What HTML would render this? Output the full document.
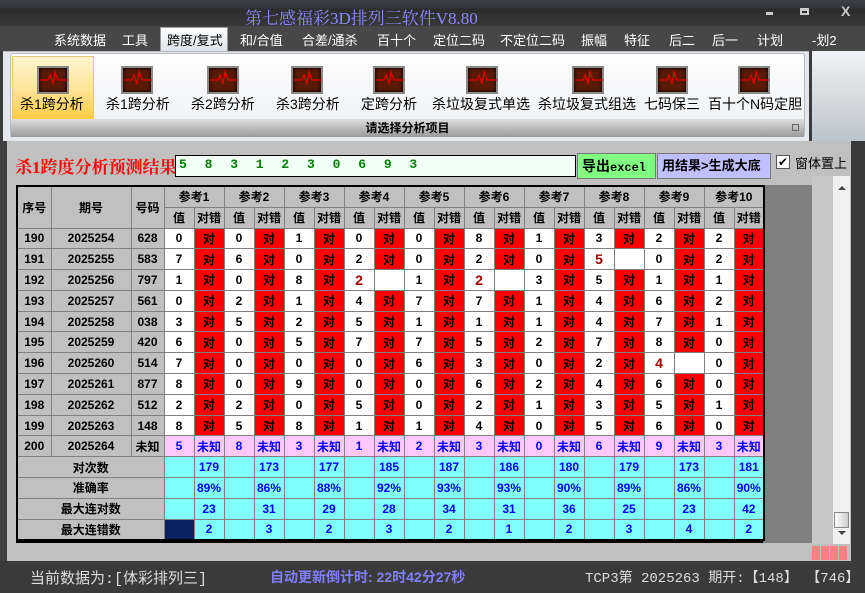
<!DOCTYPE html>
<html><head><meta charset="utf-8">
<style>
*{margin:0;padding:0;box-sizing:border-box}
body{width:865px;height:593px;overflow:hidden;background:#3a3a3a;font-family:"Liberation Sans","Noto Sans CJK SC",sans-serif;position:relative}
.abs{position:absolute}
#title{left:0;top:0;width:865px;height:26px;background:linear-gradient(#3c404a 0,#30333a 8px,#2c2c2c 9px,#383838 26px)}
#title .t{left:245px;top:4px;color:#8a8aff;font-size:17px;font-family:"Liberation Serif","Noto Serif CJK SC",serif}
#menu{left:0;top:26px;width:865px;height:25px;background:#474747}
#menu span{position:absolute;top:4px;color:#fff;font-size:13px}
#tab{left:160px;top:27px;width:68px;height:24px;background:linear-gradient(#fff,#dde3ea);border:1px solid #999;border-bottom:none}
#ribbon{left:3px;top:51px;width:806px;height:90px;background:#e4e7eb;border-top:1px solid #bbb}
#rb{left:10px;top:53px;width:795px;height:84px;background:linear-gradient(#fdfdfd,#eef0f3);border:1px solid #b8bcc4;border-radius:3px}
.ic{position:absolute;top:13px;width:32px;height:28px;background:#5a1a08;border:2px solid #8a8a8a;box-shadow:inset 0 0 4px #000}
.lbl{position:absolute;top:41px;font-size:14px;white-space:nowrap}
#strip{left:11px;top:119px;width:793px;height:18px;background:linear-gradient(#ddd,#9a9a9a);text-align:center;font-size:12px;font-weight:bold;line-height:18px}
#right1{left:812px;top:51px;width:53px;height:90px;background:linear-gradient(#f0f3f6,#bcc4cc)}
#content{left:0;top:141px;width:851px;height:420px;background:#c0c0c0;border-left:7px solid #404040}
#res{left:15px;top:153px;color:#f00;font-size:17px;font-weight:bold;font-family:"Liberation Serif","Noto Serif CJK SC",serif}
#inp{left:175px;top:155px;width:401px;height:22px;background:#f2fff8;border:1px solid #000;color:#008000;font-family:"Liberation Mono",monospace;font-weight:bold;font-size:13px;padding:1px 3px;letter-spacing:5px}
#b1{left:577px;top:153px;width:79px;height:26px;background:#80ff80;border:1px solid #777;font-size:14px;font-weight:bold;line-height:24px;padding-left:4px}
#b2{left:657px;top:153px;width:114px;height:26px;background:#c0c0ff;border:1px solid #777;font-size:13px;font-weight:bold;line-height:24px;padding-left:4px}
#cb{left:776px;top:155px;width:14px;height:14px;background:#fff;border:1px solid #555;font-size:12px;line-height:12px;text-align:center}
#cbt{left:795px;top:153px;font-size:13px}
#dark{left:763px;top:185px;width:49px;height:358px;background:#808080}
#sbp{left:812px;top:176px;width:38px;height:368px;background:#c8c8c8}
#sb{left:833px;top:176px;width:17px;height:368px;background:#f0f0f0}
#thumb{left:834px;top:512px;width:15px;height:16px;background:linear-gradient(90deg,#fff,#ccc);border:1px solid #888}
#pk{left:812px;top:546px;width:36px;height:14px;background:repeating-linear-gradient(90deg,#ff8080 0 8px,#c0c0c0 8px 9px)}
table{position:absolute;left:16px;top:185px;border-collapse:collapse;table-layout:fixed;border:2px solid #000;font-size:12px;font-weight:bold;text-align:center}
td{border:1px solid #808080;height:20.8px;padding:0;overflow:hidden;white-space:nowrap}
.h td{background:#c0c0c0;height:21px}
.g{background:#c0c0c0}
.w{background:#fff}
.r{background:#f00}
.p{background:#ffc8ff;color:#00f}
.c{background:#80ffff;color:#00f}
.d{color:#a00000;font-size:14px}
.n{background:#0a2060}
#status{left:0;top:561px;width:865px;height:32px;background:#3a3a3a;font-size:14px}
#status span{position:absolute;top:6px;white-space:pre}
</style></head><body>
<div id="title" class="abs"><div class="t abs">第七感福彩3D排列三软件V8.80</div>
<div class="abs" style="left:766px;top:12px;width:7px;height:3px;background:#ccc"></div>
<div class="abs" style="left:800px;top:8px;width:9px;height:7px;border:2px solid #ccc;border-top-width:3px"></div>
<div class="abs" style="left:841px;top:3px;color:#ccc;font-size:14px;font-weight:bold">X</div></div>
<div id="menu" class="abs">
<div id="tab" class="abs" style="top:1px"></div>
<span style="left:54px">系统数据</span><span style="left:122px">工具</span><span style="left:167px;color:#000">跨度/复式</span><span style="left:240px">和/合值</span><span style="left:302px">合差/通杀</span><span style="left:377px">百十个</span><span style="left:433px">定位二码</span><span style="left:500px">不定位二码</span><span style="left:581px">振幅</span><span style="left:624px">特征</span><span style="left:669px">后二</span><span style="left:712px">后一</span><span style="left:757px">计划</span><span style="left:812px">-划2</span>
</div>
<div id="ribbon" class="abs"></div>
<div id="right1" class="abs"></div>
<div id="rb" class="abs">
<div class="abs" style="left:1px;top:2px;width:82px;height:65px;background:linear-gradient(#fff6d0,#ffe49a 50%,#ffcc40);border:1px solid #e8c870"></div>
</div>
<div id="strip" class="abs">请选择分析项目</div>

<div class="abs" style="left:0;top:53px;width:810px;height:70px">
<div class="ic" style="left:37px"></div><div class="lbl" style="left:20px">杀1跨分析</div>
<div class="ic" style="left:121px"></div><div class="lbl" style="left:106px">杀1跨分析</div>
<div class="ic" style="left:207px"></div><div class="lbl" style="left:191px">杀2跨分析</div>
<div class="ic" style="left:291px"></div><div class="lbl" style="left:276px">杀3跨分析</div>
<div class="ic" style="left:373px"></div><div class="lbl" style="left:361px">定跨分析</div>
<div class="ic" style="left:466px"></div><div class="lbl" style="left:432px">杀垃圾复式单选</div>
<div class="ic" style="left:572px"></div><div class="lbl" style="left:538px">杀垃圾复式组选</div>
<div class="ic" style="left:656px"></div><div class="lbl" style="left:644px">七码保三</div>
<div class="ic" style="left:738px"></div><div class="lbl" style="left:708px">百十个N码定胆</div>
</div>
<svg class="abs" style="left:0;top:53px" width="810" height="50">
<g stroke="#e00000" stroke-width="1.3" fill="none">
<path d="M40 27h8l2-5 3 9 2-12 3 8h10" />
<path d="M124 27h8l2-5 3 9 2-12 3 8h10" />
<path d="M210 27h8l2-5 3 9 2-12 3 8h10" />
<path d="M294 27h8l2-5 3 9 2-12 3 8h10" />
<path d="M376 27h8l2-5 3 9 2-12 3 8h10" />
<path d="M469 27h8l2-5 3 9 2-12 3 8h10" />
<path d="M575 27h8l2-5 3 9 2-12 3 8h10" />
<path d="M659 27h8l2-5 3 9 2-12 3 8h10" />
<path d="M741 27h8l2-5 3 9 2-12 3 8h10" />
</g></svg>
<div class="abs" style="left:792px;top:124px;width:7px;height:7px;border:1px solid #666"></div>

<div id="content" class="abs"></div>
<div id="res" class="abs">杀1跨度分析预测结果</div>
<div id="inp" class="abs">5 8 3 1 2 3 0 6 9 3</div>
<div id="b1" class="abs">导出<span style="font-family:'Liberation Mono',monospace;font-size:12px">excel</span></div>
<div id="b2" class="abs">用结果&gt;生成大底</div>
<div id="cb" class="abs">✔</div>
<div id="cbt" class="abs">窗体置上</div>
<div id="dark" class="abs"></div>
<div id="sbp" class="abs"></div>
<div id="sb" class="abs"><div style="margin:10px auto 0;width:0;height:0;border:4px solid transparent;border-bottom-color:#444;border-top:none"></div><div style="position:absolute;top:355px;left:5px;width:0;height:0;border:4px solid transparent;border-top-color:#444;border-bottom:none"></div></div>
<div id="thumb" class="abs"></div>
<div id="pk" class="abs"></div>
<div class="abs" style="left:16px;top:541px;width:747px;height:2px;background:#000"></div>

<table>
<colgroup><col style="width:34px"><col style="width:80px"><col style="width:33px">
<col span="20" style="width:30px"></colgroup>
<tr class="h"><td rowspan="2">序号</td><td rowspan="2">期号</td><td rowspan="2">号码</td><td colspan="2">参考1</td><td colspan="2">参考2</td><td colspan="2">参考3</td><td colspan="2">参考4</td><td colspan="2">参考5</td><td colspan="2">参考6</td><td colspan="2">参考7</td><td colspan="2">参考8</td><td colspan="2">参考9</td><td colspan="2">参考10</td></tr>
<tr class="h"><td>值</td><td>对错</td><td>值</td><td>对错</td><td>值</td><td>对错</td><td>值</td><td>对错</td><td>值</td><td>对错</td><td>值</td><td>对错</td><td>值</td><td>对错</td><td>值</td><td>对错</td><td>值</td><td>对错</td><td>值</td><td>对错</td></tr>
<tr><td class="g">190</td><td class="g">2025254</td><td class="g">628</td><td class="w">0</td><td class="r">对</td><td class="w">0</td><td class="r">对</td><td class="w">1</td><td class="r">对</td><td class="w">0</td><td class="r">对</td><td class="w">0</td><td class="r">对</td><td class="w">8</td><td class="r">对</td><td class="w">1</td><td class="r">对</td><td class="w">3</td><td class="r">对</td><td class="w">2</td><td class="r">对</td><td class="w">2</td><td class="r">对</td></tr>
<tr><td class="g">191</td><td class="g">2025255</td><td class="g">583</td><td class="w">7</td><td class="r">对</td><td class="w">6</td><td class="r">对</td><td class="w">0</td><td class="r">对</td><td class="w">2</td><td class="r">对</td><td class="w">0</td><td class="r">对</td><td class="w">2</td><td class="r">对</td><td class="w">0</td><td class="r">对</td><td class="w d">5</td><td class="w"></td><td class="w">0</td><td class="r">对</td><td class="w">2</td><td class="r">对</td></tr>
<tr><td class="g">192</td><td class="g">2025256</td><td class="g">797</td><td class="w">1</td><td class="r">对</td><td class="w">0</td><td class="r">对</td><td class="w">8</td><td class="r">对</td><td class="w d">2</td><td class="w"></td><td class="w">1</td><td class="r">对</td><td class="w d">2</td><td class="w"></td><td class="w">3</td><td class="r">对</td><td class="w">5</td><td class="r">对</td><td class="w">1</td><td class="r">对</td><td class="w">1</td><td class="r">对</td></tr>
<tr><td class="g">193</td><td class="g">2025257</td><td class="g">561</td><td class="w">0</td><td class="r">对</td><td class="w">2</td><td class="r">对</td><td class="w">1</td><td class="r">对</td><td class="w">4</td><td class="r">对</td><td class="w">7</td><td class="r">对</td><td class="w">7</td><td class="r">对</td><td class="w">1</td><td class="r">对</td><td class="w">4</td><td class="r">对</td><td class="w">6</td><td class="r">对</td><td class="w">2</td><td class="r">对</td></tr>
<tr><td class="g">194</td><td class="g">2025258</td><td class="g">038</td><td class="w">3</td><td class="r">对</td><td class="w">5</td><td class="r">对</td><td class="w">2</td><td class="r">对</td><td class="w">5</td><td class="r">对</td><td class="w">1</td><td class="r">对</td><td class="w">1</td><td class="r">对</td><td class="w">1</td><td class="r">对</td><td class="w">4</td><td class="r">对</td><td class="w">7</td><td class="r">对</td><td class="w">1</td><td class="r">对</td></tr>
<tr><td class="g">195</td><td class="g">2025259</td><td class="g">420</td><td class="w">6</td><td class="r">对</td><td class="w">0</td><td class="r">对</td><td class="w">5</td><td class="r">对</td><td class="w">7</td><td class="r">对</td><td class="w">7</td><td class="r">对</td><td class="w">5</td><td class="r">对</td><td class="w">2</td><td class="r">对</td><td class="w">7</td><td class="r">对</td><td class="w">8</td><td class="r">对</td><td class="w">0</td><td class="r">对</td></tr>
<tr><td class="g">196</td><td class="g">2025260</td><td class="g">514</td><td class="w">7</td><td class="r">对</td><td class="w">0</td><td class="r">对</td><td class="w">0</td><td class="r">对</td><td class="w">0</td><td class="r">对</td><td class="w">6</td><td class="r">对</td><td class="w">3</td><td class="r">对</td><td class="w">0</td><td class="r">对</td><td class="w">2</td><td class="r">对</td><td class="w d">4</td><td class="w"></td><td class="w">0</td><td class="r">对</td></tr>
<tr><td class="g">197</td><td class="g">2025261</td><td class="g">877</td><td class="w">8</td><td class="r">对</td><td class="w">0</td><td class="r">对</td><td class="w">9</td><td class="r">对</td><td class="w">0</td><td class="r">对</td><td class="w">0</td><td class="r">对</td><td class="w">6</td><td class="r">对</td><td class="w">2</td><td class="r">对</td><td class="w">4</td><td class="r">对</td><td class="w">6</td><td class="r">对</td><td class="w">0</td><td class="r">对</td></tr>
<tr><td class="g">198</td><td class="g">2025262</td><td class="g">512</td><td class="w">2</td><td class="r">对</td><td class="w">2</td><td class="r">对</td><td class="w">0</td><td class="r">对</td><td class="w">5</td><td class="r">对</td><td class="w">0</td><td class="r">对</td><td class="w">2</td><td class="r">对</td><td class="w">1</td><td class="r">对</td><td class="w">3</td><td class="r">对</td><td class="w">5</td><td class="r">对</td><td class="w">1</td><td class="r">对</td></tr>
<tr><td class="g">199</td><td class="g">2025263</td><td class="g">148</td><td class="w">8</td><td class="r">对</td><td class="w">5</td><td class="r">对</td><td class="w">8</td><td class="r">对</td><td class="w">1</td><td class="r">对</td><td class="w">1</td><td class="r">对</td><td class="w">4</td><td class="r">对</td><td class="w">0</td><td class="r">对</td><td class="w">5</td><td class="r">对</td><td class="w">6</td><td class="r">对</td><td class="w">0</td><td class="r">对</td></tr>
<tr><td class="g">200</td><td class="g">2025264</td><td class="g">未知</td><td class="p">5</td><td class="p">未知</td><td class="p">8</td><td class="p">未知</td><td class="p">3</td><td class="p">未知</td><td class="p">1</td><td class="p">未知</td><td class="p">2</td><td class="p">未知</td><td class="p">3</td><td class="p">未知</td><td class="p">0</td><td class="p">未知</td><td class="p">6</td><td class="p">未知</td><td class="p">9</td><td class="p">未知</td><td class="p">3</td><td class="p">未知</td></tr>
<tr><td class="g" colspan="3">对次数</td><td class="c"></td><td class="c">179</td><td class="c"></td><td class="c">173</td><td class="c"></td><td class="c">177</td><td class="c"></td><td class="c">185</td><td class="c"></td><td class="c">187</td><td class="c"></td><td class="c">186</td><td class="c"></td><td class="c">180</td><td class="c"></td><td class="c">179</td><td class="c"></td><td class="c">173</td><td class="c"></td><td class="c">181</td></tr>
<tr><td class="g" colspan="3">准确率</td><td class="c"></td><td class="c">89%</td><td class="c"></td><td class="c">86%</td><td class="c"></td><td class="c">88%</td><td class="c"></td><td class="c">92%</td><td class="c"></td><td class="c">93%</td><td class="c"></td><td class="c">93%</td><td class="c"></td><td class="c">90%</td><td class="c"></td><td class="c">89%</td><td class="c"></td><td class="c">86%</td><td class="c"></td><td class="c">90%</td></tr>
<tr><td class="g" colspan="3">最大连对数</td><td class="c"></td><td class="c">23</td><td class="c"></td><td class="c">31</td><td class="c"></td><td class="c">29</td><td class="c"></td><td class="c">28</td><td class="c"></td><td class="c">34</td><td class="c"></td><td class="c">31</td><td class="c"></td><td class="c">36</td><td class="c"></td><td class="c">25</td><td class="c"></td><td class="c">23</td><td class="c"></td><td class="c">42</td></tr>
<tr><td class="g" colspan="3">最大连错数</td><td class="n"></td><td class="c">2</td><td class="c"></td><td class="c">3</td><td class="c"></td><td class="c">2</td><td class="c"></td><td class="c">3</td><td class="c"></td><td class="c">2</td><td class="c"></td><td class="c">1</td><td class="c"></td><td class="c">2</td><td class="c"></td><td class="c">3</td><td class="c"></td><td class="c">4</td><td class="c"></td><td class="c">2</td></tr>
</table>

<div id="status" class="abs">
<span style="left:30px;color:#ddd;font-family:'Liberation Mono','Noto Sans CJK SC',monospace;font-size:15px">当前数据为:[体彩排列三]</span>
<span style="left:270px;color:#8080ff;font-weight:bold">自动更新倒计时: 22时42分27秒</span>
<span style="left:585px;color:#ddd;font-family:'Liberation Mono','Noto Sans CJK SC',monospace;font-size:14px">TCP3第 2025263 期开:【148】 【746】</span>
</div>
</body></html>
